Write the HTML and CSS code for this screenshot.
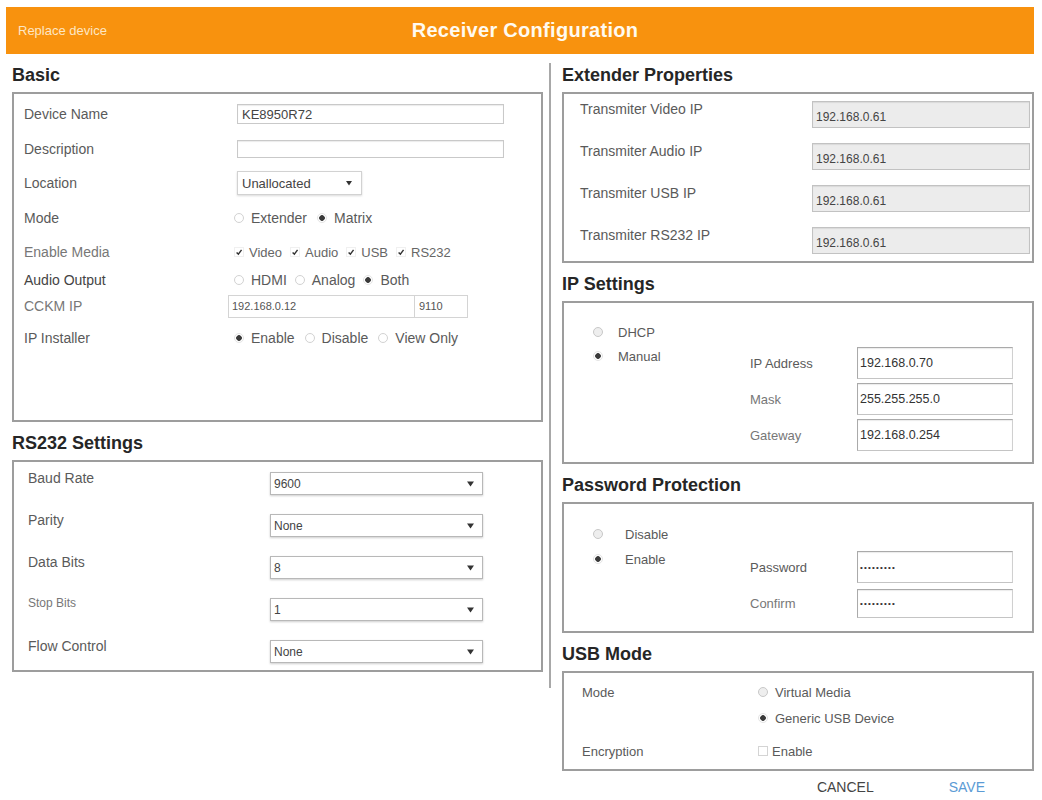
FILE: index.html
```html
<!DOCTYPE html>
<html lang="en">
<head>
<meta charset="utf-8">
<title>Receiver Configuration</title>
<link rel="stylesheet" href="styles.css">
</head>
<body>
<header class="topbar">
  <span class="replace">Replace device</span>
  <h1 class="title">Receiver Configuration</h1>
  <span class="spacer"></span>
</header>

<main class="layout">
  <section class="col col-left">
    <h2 class="heading first">Basic</h2>
    <div class="panel basic">
      <div class="lbl">Device Name</div>
      <div class="ctl"><div class="field device">KE8950R72</div></div>

      <div class="lbl">Description</div>
      <div class="ctl"><div class="field desc"></div></div>

      <div class="lbl">Location</div>
      <div class="ctl"><div class="select loc"><span>Unallocated</span><svg class="arrow" width="6" height="6" viewBox="0 0 6 6"><path d="M0 1h6L3 5.5z" fill="#333"/></svg></div></div>

      <div class="lbl">Mode</div>
      <div class="ctl opts">
        <span class="opt"><span class="radio"></span>Extender</span>
        <span class="opt"><span class="radio on"></span>Matrix</span>
      </div>

      <div class="lbl light">Enable Media</div>
      <div class="ctl opts media">
        <span class="opt"><span class="check on"><svg viewBox="0 0 10 10"><path d="M2 5.5L4.2 7.6L8.2 2.4" stroke="#333" stroke-width="1.8" fill="none"/></svg></span>Video</span>
        <span class="opt"><span class="check on"><svg viewBox="0 0 10 10"><path d="M2 5.5L4.2 7.6L8.2 2.4" stroke="#333" stroke-width="1.8" fill="none"/></svg></span>Audio</span>
        <span class="opt"><span class="check on"><svg viewBox="0 0 10 10"><path d="M2 5.5L4.2 7.6L8.2 2.4" stroke="#333" stroke-width="1.8" fill="none"/></svg></span>USB</span>
        <span class="opt"><span class="check on"><svg viewBox="0 0 10 10"><path d="M2 5.5L4.2 7.6L8.2 2.4" stroke="#333" stroke-width="1.8" fill="none"/></svg></span>RS232</span>
      </div>

      <div class="lbl dark">Audio Output</div>
      <div class="ctl opts tight">
        <span class="opt"><span class="radio"></span>HDMI</span>
        <span class="opt"><span class="radio"></span>Analog</span>
        <span class="opt"><span class="radio on"></span>Both</span>
      </div>

      <div class="lbl light">CCKM IP</div>
      <div class="ctl"><div class="cckm"><span class="cckm-ip">192.168.0.12</span><span class="cckm-port">9110</span></div></div>

      <div class="lbl">IP Installer</div>
      <div class="ctl opts">
        <span class="opt"><span class="radio on"></span>Enable</span>
        <span class="opt"><span class="radio"></span>Disable</span>
        <span class="opt"><span class="radio"></span>View Only</span>
      </div>
    </div>

    <h2 class="heading">RS232 Settings</h2>
    <div class="panel rs232">
      <div class="lbl">Baud Rate</div>
      <div class="select big"><span>9600</span><svg class="arrow" width="7" height="6" viewBox="0 0 7 6"><path d="M0 0.5h7L3.5 5.5z" fill="#333"/></svg></div>
      <div class="lbl">Parity</div>
      <div class="select big"><span>None</span><svg class="arrow" width="7" height="6" viewBox="0 0 7 6"><path d="M0 0.5h7L3.5 5.5z" fill="#333"/></svg></div>
      <div class="lbl">Data Bits</div>
      <div class="select big"><span>8</span><svg class="arrow" width="7" height="6" viewBox="0 0 7 6"><path d="M0 0.5h7L3.5 5.5z" fill="#333"/></svg></div>
      <div class="lbl light small">Stop Bits</div>
      <div class="select big"><span>1</span><svg class="arrow" width="7" height="6" viewBox="0 0 7 6"><path d="M0 0.5h7L3.5 5.5z" fill="#333"/></svg></div>
      <div class="lbl">Flow Control</div>
      <div class="select big"><span>None</span><svg class="arrow" width="7" height="6" viewBox="0 0 7 6"><path d="M0 0.5h7L3.5 5.5z" fill="#333"/></svg></div>
    </div>
  </section>

  <div class="divider"></div>

  <section class="col col-right">
    <h2 class="heading first">Extender Properties</h2>
    <div class="panel extender">
      <div class="lbl">Transmiter Video IP</div>
      <div class="field ro">192.168.0.61</div>
      <div class="lbl">Transmiter Audio IP</div>
      <div class="field ro">192.168.0.61</div>
      <div class="lbl">Transmiter USB IP</div>
      <div class="field ro">192.168.0.61</div>
      <div class="lbl">Transmiter RS232 IP</div>
      <div class="field ro">192.168.0.61</div>
    </div>

    <h2 class="heading">IP Settings</h2>
    <div class="panel ipset">
      <div class="choices ip-choices">
        <span class="opt"><span class="radio grey"></span>DHCP</span>
        <span class="opt"><span class="radio on"></span>Manual</span>
      </div>
      <div class="pairs ip-pairs">
        <div class="lbl">IP Address</div>
        <div class="field box">192.168.0.70</div>
        <div class="lbl light">Mask</div>
        <div class="field box">255.255.255.0</div>
        <div class="lbl light">Gateway</div>
        <div class="field box">192.168.0.254</div>
      </div>
    </div>

    <h2 class="heading">Password Protection</h2>
    <div class="panel pwd">
      <div class="choices pw-choices">
        <span class="opt"><span class="radio grey"></span>Disable</span>
        <span class="opt"><span class="radio on"></span>Enable</span>
      </div>
      <div class="pairs pw-pairs">
        <div class="lbl">Password</div>
        <div class="field box tall dots">•••••••••</div>
        <div class="lbl light small">Confirm</div>
        <div class="field box dots">•••••••••</div>
      </div>
    </div>

    <h2 class="heading">USB Mode</h2>
    <div class="panel usb">
      <div class="lbl">Mode</div>
      <span class="opt"><span class="radio grey"></span>Virtual Media</span>
      <div></div>
      <span class="opt"><span class="radio on"></span>Generic USB Device</span>
      <div class="lbl">Encryption</div>
      <span class="opt"><span class="check"></span>Enable</span>
    </div>

    <div class="actions">
      <span class="btn cancel">CANCEL</span>
      <span class="btn save">SAVE</span>
    </div>
  </section>
</main>
</body>
</html>
```

FILE: styles.css
```css
body {
  margin: 0;
  width: 1042px;
  background: #fff;
  font-family: "Liberation Sans", Arial, sans-serif;
  font-size: 14px;
  color: #5a5a5a;
}

/* ---------- top bar ---------- */
.topbar {
  margin: 7px 8px 0 6px;
  height: 47px;
  background: #f8920e;
  display: grid;
  grid-template-columns: 1fr auto 1fr;
  align-items: center;
}
.replace {
  padding-left: 12px;
  font-size: 13px;
  color: #fde6c4;
}
.title {
  margin: 0;
  padding-left: 10px;
  font-size: 20px;
  font-weight: bold;
  letter-spacing: 0.3px;
  color: #fffaf0;
}

/* ---------- columns ---------- */
.layout {
  display: flex;
  align-items: flex-start;
  padding: 9px 0 0 12px;
}
.col-left { width: 531px; }
.col-right { width: 472px; }
.divider {
  width: 2px;
  height: 625px;
  background: #a8a8a8;
  margin: 0 11px 0 6px;
}

.heading {
  margin: 11px 0 6px;
  font-size: 18px;
  line-height: 21px;
  font-weight: bold;
  color: #262626;
}
.heading.first { margin-top: 2px; }

.panel {
  border: 2px solid #9d9d9d;
  box-sizing: border-box;
}

.lbl { white-space: nowrap; }
.lbl.light { color: #777; }
.lbl.dark { color: #444; }
.lbl.small { font-size: 12px; }

/* ---------- controls ---------- */
.field {
  box-sizing: border-box;
  border: 1px solid #c9c9c9;
  background: #fff;
  box-shadow: inset 0 1px 1px rgba(0, 0, 0, 0.08);
  color: #444;
  font-size: 13px;
  padding: 0 4px;
  display: flex;
  align-items: center;
  white-space: nowrap;
}
.select {
  box-sizing: border-box;
  display: flex;
  align-items: center;
  justify-content: space-between;
  background: #fff;
  color: #444;
  white-space: nowrap;
}
.arrow { flex: none; }

.opts {
  display: flex;
  align-items: center;
  gap: 10px;
}
.opts.tight { gap: 8px; }
.opt {
  display: inline-flex;
  align-items: center;
  white-space: nowrap;
  color: #5a5a5a;
}
.radio {
  flex: none;
  box-sizing: border-box;
  width: 10px;
  height: 10px;
  border-radius: 50%;
  border: 1px solid #d2d2d2;
  background: #fff;
  margin-right: 7px;
}
.radio.on {
  border-color: #e4e4e4;
  background: radial-gradient(circle, #3a3a3a 0 2.5px, #fff 3.1px);
}
.radio.grey {
  background: #eee;
  border-color: #c8c8c8;
}
.check {
  flex: none;
  box-sizing: border-box;
  width: 10px;
  height: 10px;
  border: 1px solid #d4d4d4;
  background: #fff;
  margin-right: 5px;
  display: inline-flex;
}
.check.on { border-color: #f0f0f0; }
.check svg { width: 100%; height: 100%; }

/* ---------- basic ---------- */
.basic {
  height: 330px;
  padding: 2px 10px 0;
  display: grid;
  grid-template-columns: 210px 1fr;
  grid-template-rows: 36px 34px 34px 36px 32px 24px 28px 36px;
  align-items: center;
}
.field.device {
  margin-left: 3px;
  width: 267px;
  height: 20px;
}
.field.desc {
  margin-left: 3px;
  width: 267px;
  height: 18px;
}
.select.loc {
  margin-left: 3px;
  width: 125px;
  height: 24px;
  border: 1px solid #d2d2d2;
  box-shadow: 0 1px 2px rgba(0, 0, 0, 0.15);
  padding: 0 9px 0 4px;
  font-size: 13px;
}
.media { gap: 8px; font-size: 13px; }
.media .opt { color: #666; }
.cckm {
  margin-left: -6px;
  display: flex;
  height: 23px;
  width: 240px;
  border: 1px solid #d4d4d4;
  box-sizing: border-box;
  font-size: 11px;
  color: #555;
}
.cckm-ip {
  width: 182px;
  padding-left: 3px;
  display: flex;
  align-items: center;
  border-right: 1px solid #d4d4d4;
}
.cckm-port {
  padding-left: 4px;
  display: flex;
  align-items: center;
}

/* ---------- rs232 ---------- */
.rs232 {
  height: 212px;
  padding: 10px 0 0 14px;
  display: grid;
  grid-template-columns: 242px 213px;
  grid-auto-rows: 23px;
  row-gap: 19px;
  align-items: center;
}
.rs232 .lbl { align-self: start; margin-top: -2px; }
.select.big {
  height: 23px;
  border: 1px solid #b8b8b8;
  box-shadow: 0 1px 2px rgba(0, 0, 0, 0.2);
  padding: 0 8px 0 3px;
  font-size: 12px;
}

/* ---------- extender ---------- */
.extender {
  height: 171px;
  padding: 7px 2px 0 16px;
  display: grid;
  grid-template-columns: 232px 1fr;
  grid-auto-rows: 27px;
  row-gap: 15px;
  align-items: start;
}
.extender .lbl { line-height: 17px; font-size: 14px; }
.field.ro {
  height: 27px;
  background: #ececec;
  border-color: #c2c2c2;
  font-size: 12px;
  padding: 4px 3px 0;
}

/* ---------- ip / password ---------- */
.ipset, .pwd {
  display: flex;
  align-items: flex-start;
}
.ipset { height: 163px; }
.pwd { height: 131px; }
.choices {
  width: 157px;
  padding-left: 29px;
  display: flex;
  flex-direction: column;
  font-size: 13px;
}
.choices .opt { height: 20px; }
.ip-choices { padding-top: 19px; gap: 4px; }
.ip-choices .radio { margin-right: 15px; }
.pw-choices { padding-top: 20px; gap: 5px; }
.pw-choices .radio { margin-right: 22px; }

.pairs {
  display: grid;
  grid-template-columns: 107px 156px;
  align-items: center;
}
.pairs .lbl { font-size: 13px; }
.ip-pairs {
  padding-top: 44px;
  grid-auto-rows: 32px;
  row-gap: 4px;
}
.pw-pairs {
  padding-top: 47px;
  grid-template-rows: 32px 29px;
  row-gap: 6px;
}
.field.box {
  height: 100%;
  border: 1px solid #aaa;
  border-right-color: #d0d0d0;
  border-bottom-color: #c4c4c4;
  font-size: 12.5px;
  color: #333;
  padding: 0 2px;
}
.field.dots {
  font-size: 8px;
  letter-spacing: 1.2px;
  color: #333;
}

/* ---------- usb ---------- */
.usb {
  height: 100px;
  padding: 8px 0 0 18px;
  display: grid;
  grid-template-columns: 176px 1fr;
  grid-template-rows: 22px 30px 36px;
  align-items: center;
  font-size: 13px;
}
.usb .lbl { font-size: 13px; }
.usb .radio { margin-right: 7px; }
.usb .check { margin-right: 4px; }

/* ---------- actions ---------- */
.actions {
  display: flex;
  justify-content: flex-end;
  gap: 75px;
  padding-right: 49px;
  margin-top: 7px;
  font-size: 14px;
  line-height: 18px;
}
.btn.cancel { color: #444; }
.btn.save { color: #5b9bd5; }
```
